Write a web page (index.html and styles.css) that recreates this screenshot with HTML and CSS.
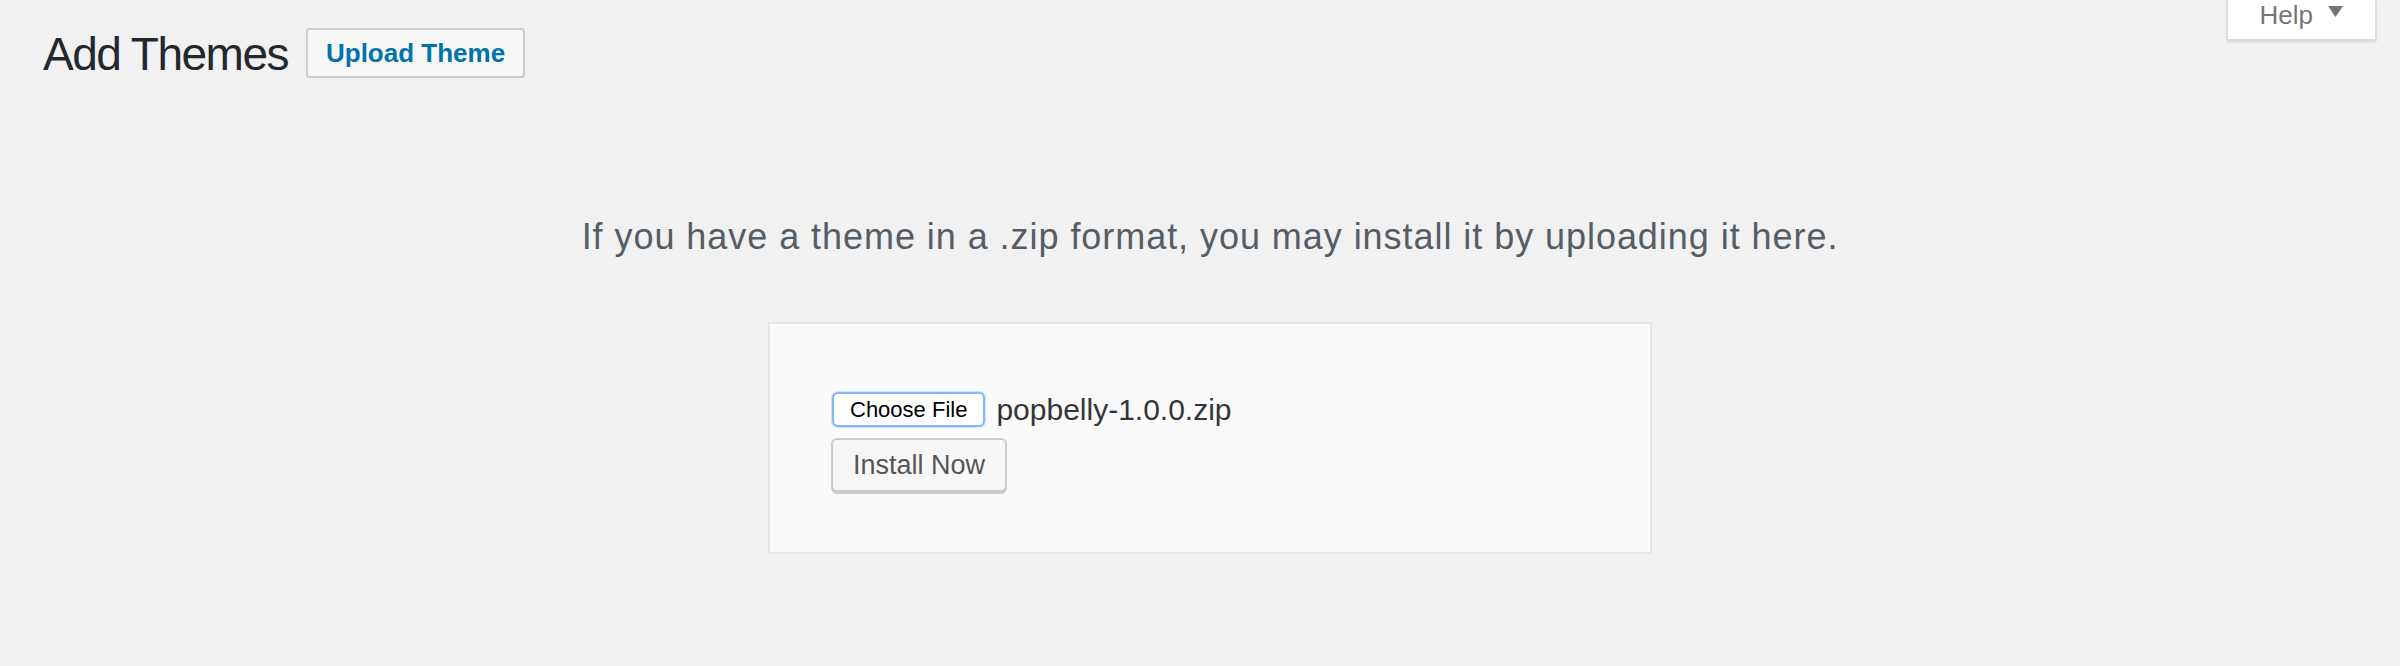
FILE: index.html
```html
<!DOCTYPE html>
<html lang="en">
<head>
  <meta charset="UTF-8">
  <meta name="viewport" content="width=device-width, initial-scale=1.0">
  <title>Add Themes</title>
  <link rel="stylesheet" href="styles.css">
</head>
<body>
  <div class="screen-meta-links">
    <button class="help-tab" type="button">
      <span>Help</span>
      <svg class="help-arrow" width="15" height="11" viewBox="0 0 15 11"><path d="M0 0h15L7.5 11z" fill="#72777c"/></svg>
    </button>
  </div>
  <div class="wrap">
    <div class="page-header">
      <h1>Add Themes</h1>
      <a class="page-title-action" href="#">Upload Theme</a>
    </div>
    <div class="upload-theme">
      <p class="install-help">If you have a theme in a .zip format, you may install it by uploading it here.</p>
      <form class="upload-form">
        <div class="file-row">
          <button class="choose-file" type="button">Choose File</button>
          <span class="file-name">popbelly-1.0.0.zip</span>
        </div>
        <button class="button" type="button">Install Now</button>
      </form>
    </div>
  </div>
</body>
</html>
```

FILE: styles.css
```css
* {
  margin: 0;
  padding: 0;
  box-sizing: border-box;
}
body {
  font-family: "Liberation Sans", Arial, sans-serif;
  background: #f1f1f1;
  color: #444;
}
.screen-meta-links {
  float: right;
  margin-right: 23px;
}
.help-tab {
  display: flex;
  align-items: flex-start;
  gap: 15px;
  padding: 0 32px 9px 32px;
  background: #fff;
  border: 2px solid #ddd;
  border-top: none;
  box-shadow: 0 2px 2px -1px rgba(0,0,0,0.12);
  font-family: inherit;
  font-size: 26px;
  line-height: 30px;
  color: #72777c;
}
.help-arrow {
  margin-top: 6px;
}
.wrap {
  padding-left: 43px;
}
.page-header {
  display: flex;
  align-items: center;
  gap: 18px;
  padding-top: 27px;
}
h1 {
  font-size: 46px;
  font-weight: 400;
  line-height: 50px;
  letter-spacing: -1.5px;
  color: #23282d;
  margin-top: 2px;
}
.page-title-action {
  display: inline-block;
  height: 50px;
  padding: 0 18px;
  border: 2px solid #ccc;
  border-radius: 4px;
  background: #f7f7f7;
  color: #0073aa;
  font-size: 26px;
  font-weight: 700;
  line-height: 46px;
  text-decoration: none;
}
.upload-theme {
  text-align: center;
  margin-left: -23px;
  padding-top: 133px;
}
.install-help {
  font-size: 36px;
  line-height: 50px;
  letter-spacing: 0.95px;
  color: #555d66;
}
.upload-form {
  display: inline-block;
  width: 884px;
  margin-top: 60px;
  padding: 68px 61px 60px;
  background: #fafafa;
  border: 2px solid #e5e5e5;
  text-align: left;
}
.file-row {
  display: flex;
  align-items: center;
  gap: 11px;
  height: 35px;
  margin-bottom: 11px;
}
.choose-file {
  height: 35px;
  padding: 0 16px;
  margin-left: 1px;
  background: #fff;
  border: 2px solid #86b5f7;
  border-radius: 6px;
  box-shadow: 0 0 0 1px #cfe1fc;
  font-family: inherit;
  font-size: 22px;
  line-height: 31px;
  color: #000;
}
.file-name {
  font-size: 30px;
  line-height: 35px;
  color: #32373c;
}
.button {
  display: block;
  height: 54px;
  padding: 0 20px;
  background: #f7f7f7;
  border: 2px solid #ccc;
  border-radius: 6px;
  box-shadow: 0 2px 0 #ccc;
  font-family: inherit;
  font-size: 27px;
  line-height: 50px;
  color: #555;
}
```
